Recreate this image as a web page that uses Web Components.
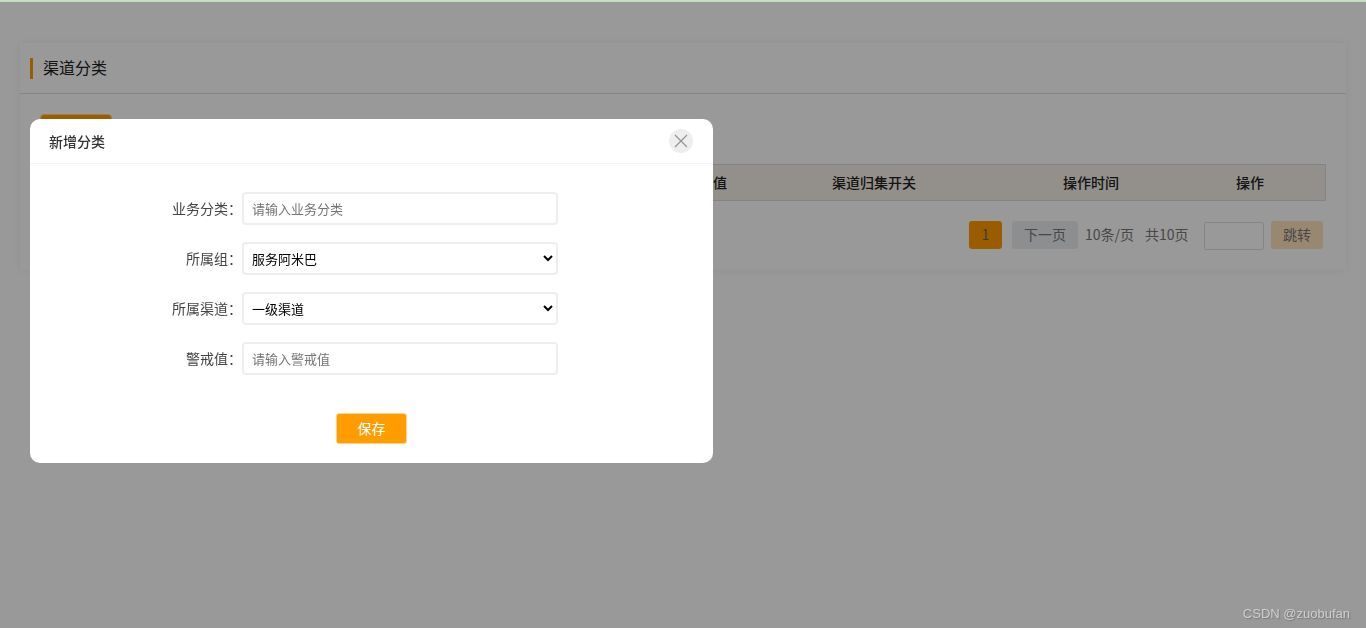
<!DOCTYPE html>
<html lang="zh">
<head>
<meta charset="utf-8">
<title>渠道分类</title>
<style>
  html, body { margin: 0; height: 100%; overflow: hidden; background: #fff; }
  body { font-family: "Noto Sans CJK SC", "Liberation Sans", sans-serif; font-size: 14px; color: #333; }
</style>
</head>
<body>
<top-bar></top-bar>
<page-card heading="渠道分类">
  <main-button slot="action" wide></main-button>
  <data-table></data-table>
  <pager-bar></pager-bar>
</page-card>
<modal-dialog heading="新增分类">
  <form-row label="业务分类："><input-box placeholder="请输入业务分类"></input-box></form-row>
  <form-row label="所属组："><select-box options="服务阿米巴"></select-box></form-row>
  <form-row label="所属渠道："><select-box options="一级渠道"></select-box></form-row>
  <form-row label="警戒值："><input-box placeholder="请输入警戒值"></input-box></form-row>
  <main-button slot="footer">保存</main-button>
</modal-dialog>
<water-mark>CSDN @zuobufan</water-mark>

<script>
class TopBar extends HTMLElement {
  constructor() {
    super();
    this.attachShadow({ mode: 'open' });
    this.shadowRoot.innerHTML = `
      <style>
        :host { display: block; height: 2px; background: #c3dfc0; }
      </style>`;
  }
}

class PageCard extends HTMLElement {
  constructor() {
    super();
    this.attachShadow({ mode: 'open' });
  }

  connectedCallback() {
    this.shadowRoot.innerHTML = `
      <style>
        :host {
          display: block;
          margin: 41px 20px 0;
          height: 227px;
          background: #fff;
          box-shadow: 0 0 8px rgba(0, 0, 0, .06);
        }
        header {
          display: flex;
          align-items: center;
          height: 50px;
          padding-left: 10px;
          border-bottom: 1px solid #ddd;
        }
        h2 {
          margin: 0;
          padding: 0 0 2px 10px;
          border-left: 3px solid #ff9c00;
          font-size: 16px;
          font-weight: 400;
          line-height: 19px;
          color: #222;
        }
        .body { padding: 20px 20px 0; }
        .action { height: 50px; }
      </style>
      <header><h2>${this.getAttribute('heading')}</h2></header>
      <div class="body">
        <div class="action"><slot name="action"></slot></div>
        <slot></slot>
      </div>`;
  }
}

class MainButton extends HTMLElement {
  constructor() {
    super();
    this.attachShadow({ mode: 'open' });
    this.shadowRoot.innerHTML = `
      <style>
        :host { display: inline-block; }
        button {
          display: block;
          width: 71px;
          height: 31px;
          padding: 0 0 2px;
          border: 1px solid #ffd48f;
          border-radius: 3px;
          background: #ff9c00;
          color: #fff;
          font: inherit;
          cursor: pointer;
        }
        :host([wide]) button { width: 72px; height: 34px; border-radius: 4px; }
      </style>
      <button type="button"><slot></slot></button>`;
  }
}

class DataTable extends HTMLElement {
  constructor() {
    super();
    this.attachShadow({ mode: 'open' });
    this.shadowRoot.innerHTML = `
      <style>
        :host {
          display: grid;
          grid-template-columns: 630px 70px 266px 168px 1fr;
          align-items: center;
          justify-items: center;
          width: 1286px;
          height: 37px;
          box-sizing: border-box;
          padding-bottom: 2px;
          border: 1px solid #ddd;
          background: #f6f1ea;
          font-weight: 500;
          font-size: 14px;
          color: #222;
        }
      </style>
      <span></span>
      <span>警戒值</span>
      <span>渠道归集开关</span>
      <span>操作时间</span>
      <span>操作</span>`;
  }
}

class PagerBar extends HTMLElement {
  constructor() {
    super();
    this.attachShadow({ mode: 'open' });
    this.shadowRoot.innerHTML = `
      <style>
        :host {
          display: flex;
          justify-content: flex-end;
          align-items: flex-start;
          width: 1283px;
          height: 29px;
          margin-top: 20px;
          color: #777;
          font-size: 14px;
          line-height: 26px;
        }
        .btn {
          display: flex;
          align-items: center;
          justify-content: center;
          height: 28px;
          padding-bottom: 2px;
          border-radius: 3px;
          box-sizing: border-box;
        }
        .cur { width: 33px; background: #ff9c00; color: #666; margin-right: 10px; }
        .next { width: 66px; background: #ebedf0; margin-right: 7px; }
        .size { width: 50px; margin-right: 10px; white-space: nowrap; }
        .total { width: 45px; margin-right: 14px; white-space: nowrap; }
        .jump {
          width: 60px;
          height: 28px;
          margin: 1px 7px 0 0;
          box-sizing: border-box;
          border: 1px solid #ddd;
          border-radius: 2px;
          background: #fff;
        }
        .go { width: 52px; background: #ffe3bd; }
      </style>
      <span class="btn cur">1</span>
      <span class="btn next">下一页</span>
      <span class="size">10条/页</span>
      <span class="total">共10页</span>
      <input class="jump" type="text">
      <span class="btn go">跳转</span>`;
  }
}

class ModalDialog extends HTMLElement {
  constructor() {
    super();
    this.attachShadow({ mode: 'open' });
  }

  connectedCallback() {
    this.shadowRoot.innerHTML = `
      <style>
        :host {
          position: fixed;
          inset: 2px 0 0 0;
          display: block;
          padding: 117px 0 0 30px;
          box-sizing: border-box;
          background: rgba(0, 0, 0, .4);
        }
        .box {
          width: 683px;
          height: 344px;
          background: #fff;
          border-radius: 10px;
          box-sizing: border-box;
          overflow: hidden;
        }
        header {
          display: flex;
          justify-content: space-between;
          align-items: center;
          height: 45px;
          box-sizing: border-box;
          padding: 0 20px 0 19px;
          border-bottom: 1px solid #f3f3f3;
        }
        h3 { margin: 0; font-size: 14px; font-weight: 500; color: #333; }
        .close {
          width: 24px;
          height: 24px;
          margin-top: -1px;
          border-radius: 50%;
          background: #eee;
          display: flex;
          align-items: center;
          justify-content: center;
        }
        .fields {
          display: flex;
          flex-direction: column;
          gap: 17px;
          padding-top: 28px;
        }
        footer {
          padding: 38px 0 0 306px;
          line-height: 0;
        }
      </style>
      <div class="box">
        <header>
          <h3>${this.getAttribute('heading')}</h3>
          <span class="close">
            <svg width="14" height="14" viewBox="0 0 14 14"><path d="M1 1 13 13M13 1 1 13" stroke="#8f9299" stroke-width="1.2" fill="none"/></svg>
          </span>
        </header>
        <div class="fields"><slot></slot></div>
        <footer><slot name="footer"></slot></footer>
      </div>`;
  }
}

class FormRow extends HTMLElement {
  constructor() {
    super();
    this.attachShadow({ mode: 'open' });
  }

  connectedCallback() {
    this.shadowRoot.innerHTML = `
      <style>
        :host {
          display: grid;
          grid-template-columns: 212px 316px;
          align-items: center;
          height: 33px;
        }
        label { text-align: right; font-size: 14px; color: #444; padding-bottom: 2px; }
      </style>
      <label>${this.getAttribute('label')}</label>
      <slot></slot>`;
  }
}

const fieldStyle = `
  :host { display: block; }
  input, select {
    display: block;
    width: 316px;
    height: 33px;
    box-sizing: border-box;
    border: 2px solid #eee;
    border-radius: 4px;
    background: #fff;
    font: 13px "Noto Sans CJK SC", "Liberation Sans", sans-serif;
    color: #000;
    outline: none;
  }
  input { padding: 0 8px; }
  select { padding: 0 4px; }
`;

class InputBox extends HTMLElement {
  constructor() {
    super();
    this.attachShadow({ mode: 'open' });
  }

  connectedCallback() {
    this.shadowRoot.innerHTML = `
      <style>${fieldStyle}</style>
      <input type="text" placeholder="${this.getAttribute('placeholder')}">`;
  }
}

class SelectBox extends HTMLElement {
  constructor() {
    super();
    this.attachShadow({ mode: 'open' });
  }

  connectedCallback() {
    this.shadowRoot.innerHTML = `
      <style>${fieldStyle}</style>
      <select><option>${this.getAttribute('options')}</option></select>`;
  }
}

class WaterMark extends HTMLElement {
  constructor() {
    super();
    this.attachShadow({ mode: 'open' });
    this.shadowRoot.innerHTML = `
      <style>
        :host {
          position: fixed;
          right: 16px;
          bottom: 7px;
          font: 13px "Liberation Sans", sans-serif;
          color: #cfcfcf;
          text-shadow: 1px 1px 1px #777;
        }
      </style>
      <slot></slot>`;
  }
}

customElements.define('top-bar', TopBar);
customElements.define('page-card', PageCard);
customElements.define('main-button', MainButton);
customElements.define('data-table', DataTable);
customElements.define('pager-bar', PagerBar);
customElements.define('modal-dialog', ModalDialog);
customElements.define('form-row', FormRow);
customElements.define('input-box', InputBox);
customElements.define('select-box', SelectBox);
customElements.define('water-mark', WaterMark);
</script>
</body>
</html>
